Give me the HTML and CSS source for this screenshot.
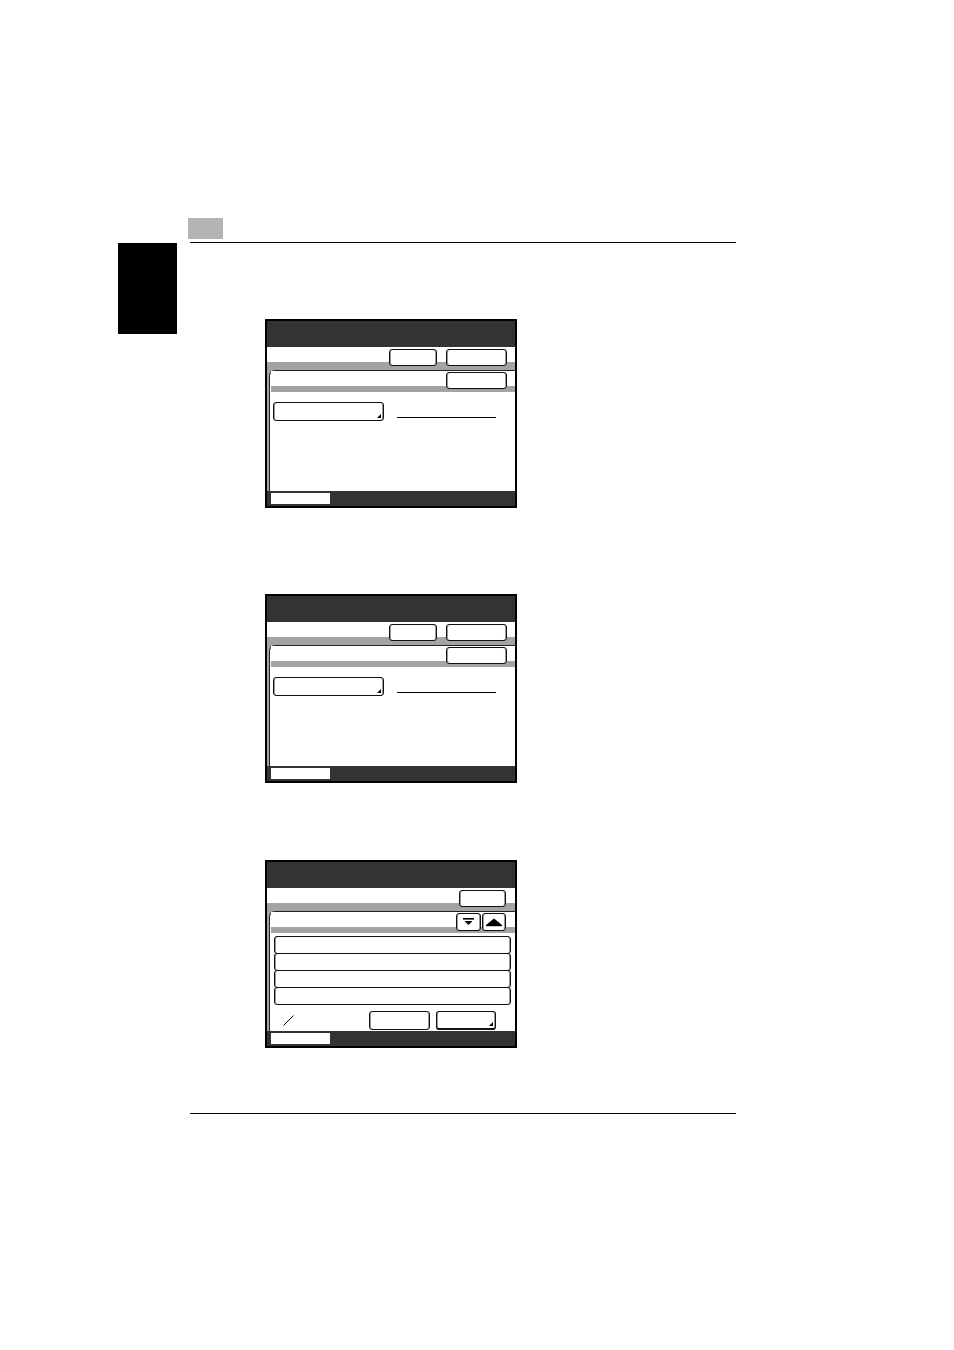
FILE: index.html
```html
<!DOCTYPE html>
<html lang="en">
<head>
<meta charset="utf-8">
<title>Screens</title>
<link rel="stylesheet" href="styles.css">
</head>
<body>
<div class="page">
  <div class="tag"></div>
  <div class="rule rule-top"></div>
  <div class="main">
    <div class="tab"></div>
    <div class="screens">

      <div class="screen">
        <div class="hdr"></div>
        <div class="toolbar">
          <div class="btn w48"></div>
          <div class="btn w61"></div>
        </div>
        <div class="body">
          <div class="panel">
            <div class="panel-head">
              <div class="btn w61"></div>
            </div>
            <div class="panel-body">
              <div class="field-row">
                <div class="btn wide corner"></div>
                <div class="underline"></div>
              </div>
            </div>
          </div>
        </div>
        <div class="foot"><div class="foot-box"></div></div>
      </div>

      <div class="screen screen-2">
        <div class="hdr"></div>
        <div class="toolbar">
          <div class="btn w48"></div>
          <div class="btn w61"></div>
        </div>
        <div class="body">
          <div class="panel">
            <div class="panel-head">
              <div class="btn w61"></div>
            </div>
            <div class="panel-body">
              <div class="field-row">
                <div class="btn wide corner"></div>
                <div class="underline"></div>
              </div>
            </div>
          </div>
        </div>
        <div class="foot"><div class="foot-box"></div></div>
      </div>

      <div class="screen screen-3">
        <div class="hdr"></div>
        <div class="toolbar toolbar-3">
          <div class="btn w47"></div>
        </div>
        <div class="body">
          <div class="panel">
            <div class="panel-head panel-head-3">
              <div class="btn arrow arrow-down">
                <svg width="23" height="16" viewBox="0 0 23 16"><rect x="6" y="4" width="11" height="1.6" fill="#000"/><polygon points="7.5,7 15.5,7 11.5,11" fill="#000"/></svg>
              </div>
              <div class="btn arrow arrow-up">
                <svg width="22" height="16" viewBox="0 0 22 16"><polygon points="3,11 19,11 11,4.5" fill="#000"/><rect x="3" y="11" width="16" height="1.2" fill="#000"/></svg>
              </div>
            </div>
            <div class="panel-body panel-body-3">
              <div class="list">
                <div class="row"></div>
                <div class="row"></div>
                <div class="row"></div>
                <div class="row"></div>
              </div>
              <div class="actions">
                <svg class="slash" width="11" height="11" viewBox="0 0 11 11"><line x1="0.5" y1="10.5" x2="10.5" y2="0.5" stroke="#000" stroke-width="1"/></svg>
                <div class="btn w61 tall push"></div>
                <div class="btn w60 tall thick corner"></div>
              </div>
            </div>
          </div>
        </div>
        <div class="foot"><div class="foot-box"></div></div>
      </div>

    </div>
  </div>
  <div class="rule rule-bottom"></div>
</div>
</body>
</html>
```

FILE: styles.css
```css
* { box-sizing: border-box; }
html, body { margin: 0; padding: 0; background: #fff; }
body { font-family: "Liberation Sans", Arial, sans-serif; }

.page { width: 954px; height: 1350px; padding-top: 218px; }

.tag { margin-left: 188px; width: 35px; height: 21px; background: #b3b3b3; }

.rule { margin-left: 190px; width: 546px; height: 1px; background: #000; }
.rule-top { margin-top: 3px; }
.rule-bottom { margin-top: 65px; }

.main { display: flex; align-items: flex-start; }
.tab { margin-left: 118px; width: 59px; height: 91px; background: #000; flex: none; }
.screens { margin-left: 88px; padding-top: 76px; display: flex; flex-direction: column; }

.screen {
  width: 252px; height: 189px;
  border: 2px solid #000;
  display: flex; flex-direction: column;
  background: #fff;
}
.screen-2 { margin-top: 86px; }
.screen-3 { margin-top: 77px; height: 188px; }

.hdr { height: 26px; background: #333; flex: none; }

.toolbar {
  height: 23px; flex: none;
  background: linear-gradient(#fff 0 15px, #a3a3a3 15px 23px);
  display: flex; justify-content: flex-end; gap: 9px;
  padding: 2px 8px 0 0;
}
.toolbar-3 { padding-right: 9px; }

.btn {
  height: 17px;
  background: #fff;
  border: 1px solid #111;
  border-radius: 3px;
  box-shadow: inset 1px 0 0 #9a9a9a, inset -1px 0 0 #9a9a9a;
  position: relative;
  flex: none;
}
.w47 { width: 47px; }
.w48 { width: 48px; }
.w60 { width: 60px; }
.w61 { width: 61px; }
.wide { width: 111px; height: 19px; }
.tall { height: 19px; }
.thick { border-bottom-width: 2px; }

.corner::after {
  content: "";
  position: absolute; right: 2px; bottom: 2px;
  width: 0; height: 0;
  border-left: 4px solid transparent;
  border-bottom: 4px solid #000;
}

.body {
  flex: 1; display: flex;
  background: #a3a3a3;
  padding-left: 2px;
}
.panel {
  flex: 1; display: flex; flex-direction: column;
  background: #fff;
  border-top: 1px solid #222;
  border-left: 1px solid #222;
  border-top-left-radius: 6px;
}

.panel-head {
  height: 21px; flex: none;
  margin-left: 1px;
  background: linear-gradient(#fff 0 15px, #a3a3a3 15px 21px);
  display: flex; justify-content: flex-end;
  padding: 1px 8px 0 0;
}
.panel-head-3 { padding: 1px 9px 0 0; gap: 1px; }

.arrow { height: 18px; display: flex; align-items: center; justify-content: center; }
.arrow-down { width: 25px; }
.arrow-up { width: 24px; }
.arrow svg { display: block; }

.panel-body { padding: 10px 0 0 3px; }
.field-row { display: flex; align-items: flex-end; }
.underline { margin-left: 13px; margin-bottom: 3px; width: 99px; height: 1px; background: #000; }

.panel-body-3 { padding: 3px 4px 0 4px; }
.list { display: flex; flex-direction: column; }
.row {
  height: 18px;
  border: 1px solid #111;
  border-radius: 3px;
  box-shadow: inset 1px 0 0 #9a9a9a, inset -1px 0 0 #9a9a9a;
  background: #fff;
}
.row + .row { margin-top: -1px; }

.actions { display: flex; align-items: center; margin-top: 6px; padding-right: 15px; gap: 6px; }
.slash { margin-left: 9px; display: block; }
.push { margin-left: auto; }

.foot {
  height: 15px; flex: none;
  background: #333;
  padding: 2px 0 0 4px;
}
.foot-box { width: 59px; height: 11px; background: #fff; }
```
